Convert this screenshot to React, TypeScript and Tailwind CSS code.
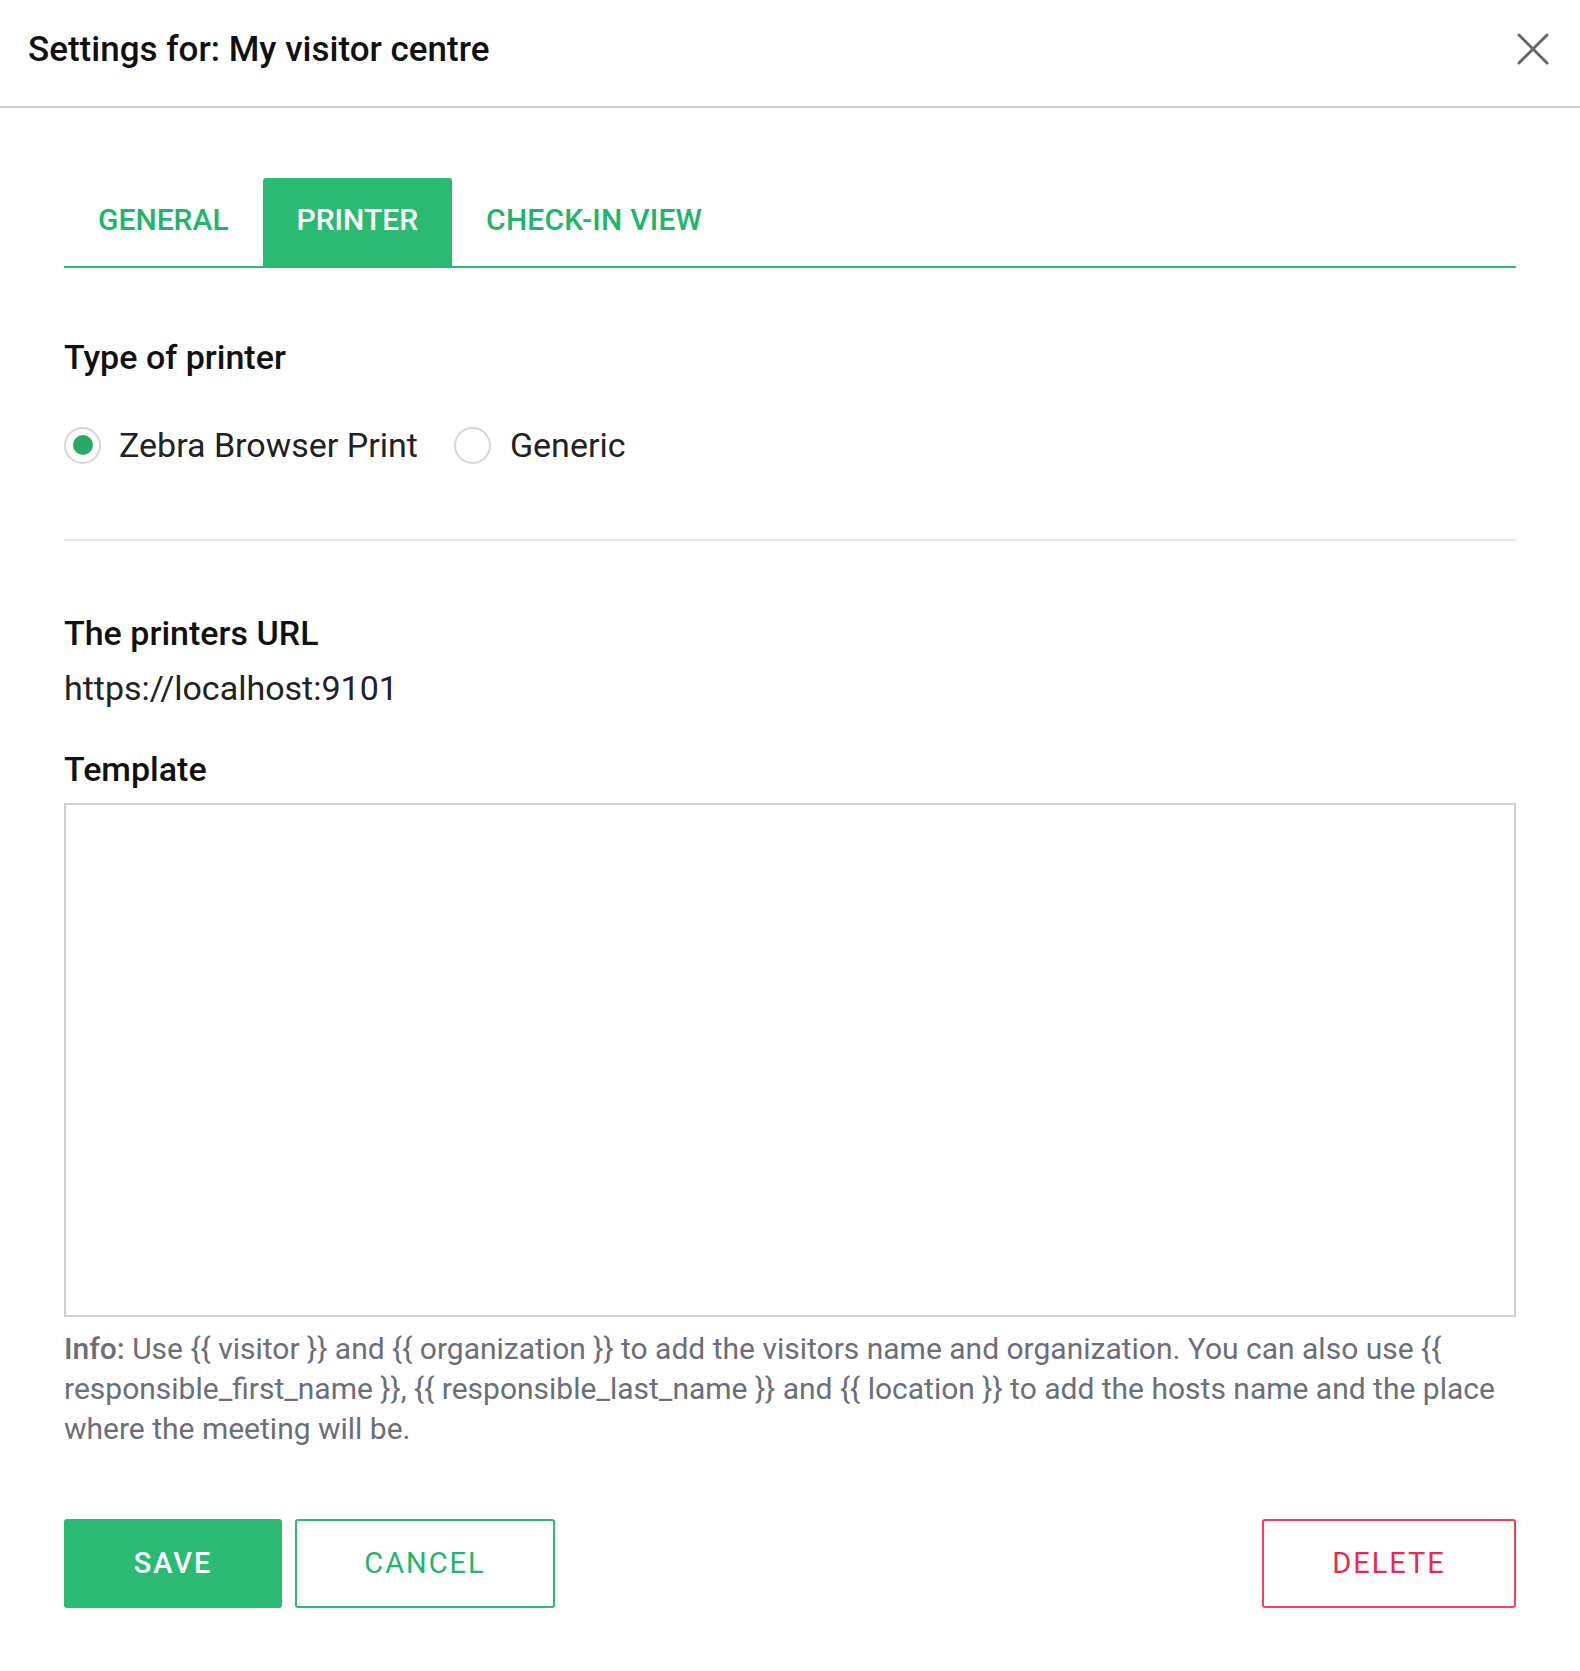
import React from "react";

export default function App() {
  const font = { fontFamily: "Roboto, 'Liberation Sans', sans-serif" };
  return (
    <div className="w-[1580px] h-[1671px] bg-white text-[#111]" style={font}>
      <div className="h-[108px] flex items-center justify-between pl-[28px] pr-[30px] pb-[8px] border-b-2 border-[#cfcfcf]">
        <div className="text-[35px] font-medium text-[#111] leading-none">Settings for: My visitor centre</div>
        <svg width="34" height="34" viewBox="0 0 34 34">
          <path d="M3 3 L31 31 M31 3 L3 31" stroke="#666" strokeWidth="3" strokeLinecap="round" />
        </svg>
      </div>
      <div className="px-[64px]">
        <div className="mt-[70px] flex border-b-2 border-[#2bba72] h-[90px]">
          <div className="px-[34px] pb-[5px] flex items-center text-[30px] font-medium text-[#1fb56a]">GENERAL</div>
          <div className="px-[34px] pb-[5px] flex items-center text-[30px] font-medium text-white bg-[#2bba72] rounded-t-[3px]">PRINTER</div>
          <div className="px-[34px] pb-[5px] flex items-center text-[30px] font-medium text-[#1fb56a] tracking-[0.2px]">CHECK-IN VIEW</div>
        </div>
        <div className="mt-[71px] text-[34px] font-medium leading-[36px]">Type of printer</div>
        <div className="mt-[52px] flex items-center h-[36px] text-[34px] text-[#222]">
          <div className="w-[37px] h-[37px] rounded-full border-2 border-[#d6d6d6] flex items-center justify-center">
            <div className="w-[20px] h-[20px] rounded-full bg-[#2aa866]" />
          </div>
          <span className="ml-[18px]">Zebra Browser Print</span>
          <div className="ml-[36px] w-[37px] h-[37px] rounded-full border-2 border-[#d6d6d6]" />
          <span className="ml-[19px]">Generic</span>
        </div>
        <div className="mt-[76px] border-t-2 border-[#e6e6e6]" />
        <div className="mt-[74px] text-[34px] font-medium leading-[36px]">The printers URL</div>
        <div className="mt-[17px] text-[34px] leading-[40px] text-[#222]">https://localhost:9101</div>
        <div className="mt-[43px] text-[34px] font-medium leading-[36px]">Template</div>
        <textarea className="mt-[16px] block w-full h-[514px] border-2 border-[#d0d0d0] resize-none outline-none" />
        <div className="mt-[12px] text-[30px] leading-[40px] text-[#6b6e78]">
          <span className="font-medium">Info:</span> Use {"{{"} visitor {"}}"} and {"{{"} organization {"}}"} to add the visitors name and organization. You can also use {"{{"} responsible_first_name {"}}"}, {"{{"} responsible_last_name {"}}"} and {"{{"} location {"}}"} to add the hosts name and the place where the meeting will be.
        </div>
        <div className="mt-[70px] flex">
          <button className="w-[218px] h-[89px] bg-[#2bba72] text-white text-[29px] font-medium tracking-[2px] rounded-[3px]">SAVE</button>
          <button className="ml-[13px] w-[260px] h-[89px] border-2 border-[#2bba72] text-[#1fb56a] text-[29px] tracking-[2px] rounded-[3px]">CANCEL</button>
          <div className="flex-1" />
          <button className="w-[254px] h-[89px] border-2 border-[#ff3b5c] text-[#f0264d] text-[29px] tracking-[2px] rounded-[3px]">DELETE</button>
        </div>
      </div>
    </div>
  );
}
